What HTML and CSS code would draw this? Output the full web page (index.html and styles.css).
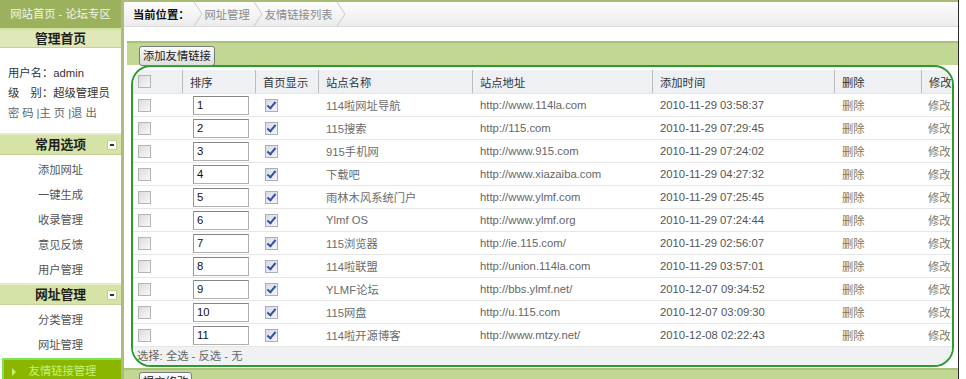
FILE: index.html
```html
<!DOCTYPE html>
<html lang="zh-CN">
<head>
<meta charset="utf-8">
<title>友情链接列表</title>
<link rel="stylesheet" href="styles.css">
</head>
<body>
<div class="page">
  <aside class="side">
    <div class="side-top">网站首页 - 论坛专区</div>
    <div class="sec-head sec-home">管理首页</div>
    <div class="userinfo">
      <p>用户名：admin</p>
      <p>级　别：超级管理员</p>
      <p class="links"><a>密码</a>|<a>主页</a>|<a>退出</a></p>
    </div>
    <div class="sec-head">常用选项<span class="toggle"></span></div>
    <ul class="menu">
      <li>添加网址</li>
      <li>一键生成</li>
      <li>收录管理</li>
      <li>意见反馈</li>
      <li>用户管理</li>
    </ul>
    <div class="sec-head">网址管理<span class="toggle"></span></div>
    <ul class="menu">
      <li>分类管理</li>
      <li>网址管理</li>
      <li class="active"><span class="tri"></span>友情链接管理</li>
    </ul>
  </aside>

  <main class="main">
    <div class="crumbs">
      <span class="here">当前位置：</span>
      <svg class="sep" viewBox="0 0 10 24" width="10" height="24"><polyline points="1,0 9,12 1,24" fill="none" stroke="#c9c9c9" stroke-width="1"/></svg>
      <span class="crumb">网址管理</span>
      <svg class="sep" viewBox="0 0 10 24" width="10" height="24"><polyline points="1,0 9,12 1,24" fill="none" stroke="#c9c9c9" stroke-width="1"/></svg>
      <span class="crumb">友情链接列表</span>
      <svg class="sep" viewBox="0 0 10 24" width="10" height="24"><polyline points="1,0 9,12 1,24" fill="none" stroke="#c9c9c9" stroke-width="1"/></svg>
    </div>

    <div class="panel">
      <div class="toolbar"><span class="btn">添加友情链接</span></div>
      <div class="box">
        <div class="grid thead">
          <div class="c c1"><span class="cb"></span></div>
          <div class="c">排序</div>
          <div class="c">首页显示</div>
          <div class="c">站点名称</div>
          <div class="c">站点地址</div>
          <div class="c">添加时间</div>
          <div class="c">删除</div>
          <div class="c">修改</div>
        </div>
        <div class="grid row"><div class="c c1"><span class="cb"></span></div><div class="c c2"><span class="inp">1</span></div><div class="c c3"><span class="cb on"></span></div><div class="c name">114啦网址导航</div><div class="c url">http://www.114la.com</div><div class="c time">2010-11-29 03:58:37</div><div class="c op">删除</div><div class="c op">修改</div></div>
        <div class="grid row"><div class="c c1"><span class="cb"></span></div><div class="c c2"><span class="inp">2</span></div><div class="c c3"><span class="cb on"></span></div><div class="c name">115搜索</div><div class="c url">http://115.com</div><div class="c time">2010-11-29 07:29:45</div><div class="c op">删除</div><div class="c op">修改</div></div>
        <div class="grid row"><div class="c c1"><span class="cb"></span></div><div class="c c2"><span class="inp">3</span></div><div class="c c3"><span class="cb on"></span></div><div class="c name">915手机网</div><div class="c url">http://www.915.com</div><div class="c time">2010-11-29 07:24:02</div><div class="c op">删除</div><div class="c op">修改</div></div>
        <div class="grid row"><div class="c c1"><span class="cb"></span></div><div class="c c2"><span class="inp">4</span></div><div class="c c3"><span class="cb on"></span></div><div class="c name">下载吧</div><div class="c url">http://www.xiazaiba.com</div><div class="c time">2010-11-29 04:27:32</div><div class="c op">删除</div><div class="c op">修改</div></div>
        <div class="grid row"><div class="c c1"><span class="cb"></span></div><div class="c c2"><span class="inp">5</span></div><div class="c c3"><span class="cb on"></span></div><div class="c name">雨林木风系统门户</div><div class="c url">http://www.ylmf.com</div><div class="c time">2010-11-29 07:25:45</div><div class="c op">删除</div><div class="c op">修改</div></div>
        <div class="grid row"><div class="c c1"><span class="cb"></span></div><div class="c c2"><span class="inp">6</span></div><div class="c c3"><span class="cb on"></span></div><div class="c name">Ylmf OS</div><div class="c url">http://www.ylmf.org</div><div class="c time">2010-11-29 07:24:44</div><div class="c op">删除</div><div class="c op">修改</div></div>
        <div class="grid row"><div class="c c1"><span class="cb"></span></div><div class="c c2"><span class="inp">7</span></div><div class="c c3"><span class="cb on"></span></div><div class="c name">115浏览器</div><div class="c url">http://ie.115.com/</div><div class="c time">2010-11-29 02:56:07</div><div class="c op">删除</div><div class="c op">修改</div></div>
        <div class="grid row"><div class="c c1"><span class="cb"></span></div><div class="c c2"><span class="inp">8</span></div><div class="c c3"><span class="cb on"></span></div><div class="c name">114啦联盟</div><div class="c url">http://union.114la.com</div><div class="c time">2010-11-29 03:57:01</div><div class="c op">删除</div><div class="c op">修改</div></div>
        <div class="grid row"><div class="c c1"><span class="cb"></span></div><div class="c c2"><span class="inp">9</span></div><div class="c c3"><span class="cb on"></span></div><div class="c name">YLMF论坛</div><div class="c url">http://bbs.ylmf.net/</div><div class="c time">2010-12-07 09:34:52</div><div class="c op">删除</div><div class="c op">修改</div></div>
        <div class="grid row"><div class="c c1"><span class="cb"></span></div><div class="c c2"><span class="inp">10</span></div><div class="c c3"><span class="cb on"></span></div><div class="c name">115网盘</div><div class="c url">http://u.115.com</div><div class="c time">2010-12-07 03:09:30</div><div class="c op">删除</div><div class="c op">修改</div></div>
        <div class="grid row"><div class="c c1"><span class="cb"></span></div><div class="c c2"><span class="inp">11</span></div><div class="c c3"><span class="cb on"></span></div><div class="c name">114啦开源博客</div><div class="c url">http://www.mtzy.net/</div><div class="c time">2010-12-08 02:22:43</div><div class="c op">删除</div><div class="c op">修改</div></div>
        <div class="selectrow">选择: <a>全选</a> - <a>反选</a> - <a>无</a></div>
      </div>
      <div class="toolbar bottom"><span class="btn">提交修改</span></div>
    </div>
  </main>
  <div class="edge"></div>
</div>
</body>
</html>
```

FILE: styles.css
```css
* { box-sizing: border-box; margin: 0; padding: 0; }
html, body { width: 966px; height: 379px; overflow: hidden; background: #fff; }
body {
  font-family: "Liberation Sans", "Noto Sans CJK SC", sans-serif;
  font-size: 11.3px;
  color: #333;
}
ul { list-style: none; }
a { color: inherit; text-decoration: none; }

.page { display: flex; height: 379px; }

/* ---------- sidebar ---------- */
.side {
  width: 124px;
  flex: none;
  border-right: 3px solid #adbb7c;
  background: #fff;
}
.side-top {
  height: 28px;
  line-height: 28px;
  background: #9cb15e;
  color: #f3f6e6;
  text-align: center;
}
.sec-head {
  position: relative;
  height: 22px;
  border-top: 2px solid #e4edc6;
  border-bottom: 1px solid #c2d199;
  background: #d6e3a6;
  line-height: 19px;
  text-align: center;
  font-weight: bold;
  font-size: 12.8px;
  color: #1e1e1e;
}
.sec-home {
  height: 20px;
  border-top-color: #cfe59a;
  background: #dfe9b7;
  line-height: 17px;
}
.toggle {
  position: absolute;
  right: 4px;
  top: 5px;
  width: 10px;
  height: 10px;
  background: #fbfcf6;
  border: 1px solid #c4cf9e;
}
.toggle::after {
  content: "";
  position: absolute;
  left: 2px;
  top: 3px;
  width: 4px;
  height: 2px;
  background: #333;
}
.userinfo {
  padding: 15px 0 10px 8px;
  color: #333;
}
.userinfo p { height: 20px; line-height: 20px; }
.userinfo .links { color: #666; }
.userinfo .links a { letter-spacing: 3px; }

.menu { padding-top: 3px; }
.menu li {
  height: 25px;
  line-height: 25px;
  text-align: center;
  color: #555;
}
.menu li.active {
  position: relative;
  margin-left: 2px;
  background: #8ab600;
  border-top: 2px solid #7fe35a;
  border-left: 2px solid #7fe35a;
  color: #c2f07a;
  line-height: 23px;
}
.tri {
  position: absolute;
  left: 8px;
  top: 8px;
  width: 0;
  height: 0;
  border-top: 4px solid transparent;
  border-bottom: 4px solid transparent;
  border-left: 4px solid #c2f07a;
}

/* ---------- main ---------- */
.main {
  flex: 1;
  min-width: 0;
}
.edge {
  width: 8px;
  flex: none;
  border-left: 1px solid #2a2a2a;
  background: #fff;
}
.crumbs {
  height: 27px;
  border-top: 2px solid #a9bc74;
  border-bottom: 1px solid #dadada;
  background: linear-gradient(#fdfdfd, #ececec);
  display: flex;
  align-items: center;
  padding-left: 9px;
}
.crumbs .here { color: #111; font-weight: bold; }
.crumbs .crumb { color: #8a8a8a; }
.crumbs .sep { margin: 0 2px 0 3px; flex: none; }

.panel {
  margin: 14px 0 0 3px;
}
.toolbar {
  height: 24px;
  border-top: 2px solid #a8c27a;
  background: #c3d795;
  padding: 3px 0 0 12px;
}
.toolbar.bottom {
  margin: 1px 0 0 -3px;
  padding: 2px 0 0 15px;
}
.btn {
  display: inline-block;
  height: 20px;
  line-height: 18px;
  padding: 0 3px;
  border: 1px solid #7b7b7b;
  border-radius: 3px;
  background: linear-gradient(#fbfbfb, #dedede);
  color: #1a1a1a;
}

.box {
  margin: 0 4px;
  border: 2px solid #2d9b2d;
  border-radius: 20px;
  overflow: hidden;
  background: #fff;
  padding-top: 3px;
}
.grid {
  display: grid;
  grid-template-columns: 49px 73px 63px 154px 180px 182px 87px 1fr;
  height: 23px;
}
.c {
  display: flex;
  align-items: center;
  white-space: nowrap;
  padding-left: 8px;
}
.thead { background: #eef0f3; }
.thead .c { color: #333; padding-left: 7px; border-left: 1px solid #bdbdbd; }
.thead .c.c1 { border-left: 0; padding-left: 5px; }
.row { border-top: 1px solid #e6e6e6; }
.row .c1 { padding-left: 5px; }
.row .c2 { padding-left: 11px; }
.row .c3 { padding-left: 10px; }
.name { color: #6c6c6c; }
.url { color: #666; }
.time { color: #555; }
.op { color: #85795a; }
.row .op:last-child { padding-left: 7px; }

.cb {
  display: inline-block;
  width: 13px;
  height: 13px;
  border: 1px solid #b4b4b4;
  background: linear-gradient(135deg, #dcdcdc, #f8f8f8);
  position: relative;
}
.cb.on {
  border-color: #a9aebb;
  background: linear-gradient(135deg, #d7dbe4, #f4f5f8);
}
.cb.on::after {
  content: "";
  position: absolute;
  left: 3px;
  top: 0px;
  width: 3px;
  height: 7px;
  border-right: 2px solid #3353a5;
  border-bottom: 2px solid #3353a5;
  transform: rotate(40deg);
}
.inp {
  display: flex;
  align-items: center;
  width: 56px;
  height: 19px;
  border: 1px solid #b0b0b0;
  border-top-color: #858585;
  border-left-color: #999;
  padding-left: 3px;
  color: #111;
  background: #fff;
}
.selectrow {
  height: 19px;
  line-height: 18px;
  border-top: 1px solid #e6e6e6;
  background: #f0f1f3;
  padding-left: 4px;
  color: #666;
}
```
